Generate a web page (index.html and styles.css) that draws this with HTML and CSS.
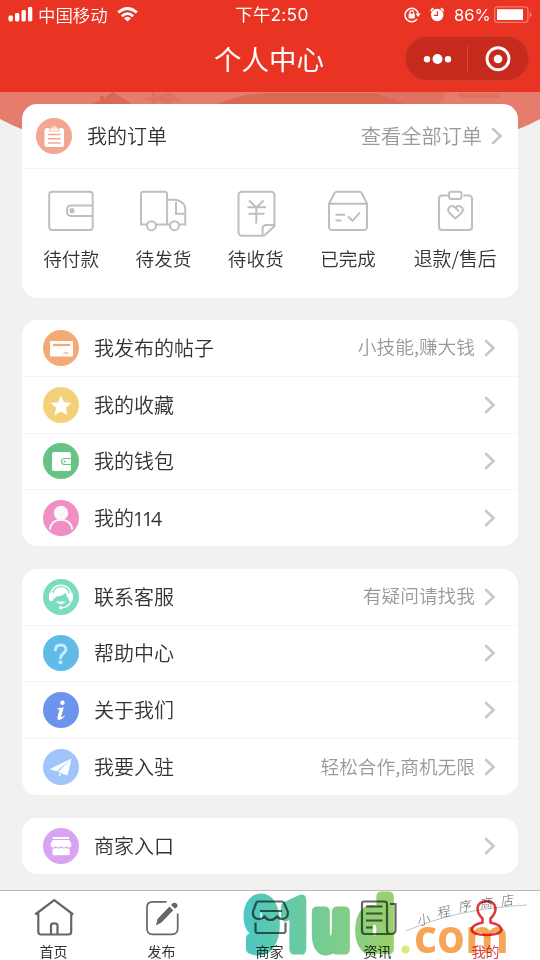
FILE: index.html
```html
<!DOCTYPE html>
<html lang="zh-CN">
<head>
<meta charset="utf-8">
<title>个人中心</title>
<link rel="stylesheet" href="styles.css">
</head>
<body>
<svg width="0" height="0" class="defs"><symbol id="chev" viewBox="0 0 12 20"><path d="M1.300 2.200 9.500 10 1.300 17.800" fill="none" stroke="#c7c7cc" stroke-width="2.600"/></symbol></svg>
<div class="app">
  <header class="header">
    <div class="status">
      <div class="status-left">
        <svg width="25" height="16" viewBox="8 7 25 16" fill="#fff"><rect x="8.500" y="15.500" width="4.300" height="6" rx="1.400"/><rect x="15" y="13" width="4.300" height="8.500" rx="1.400"/><rect x="21.500" y="10" width="4.300" height="11.500" rx="1.400"/><rect x="28" y="7" width="4.300" height="14.500" rx="1.400"/></svg>
        <span class="carrier">中国移动</span>
        <svg class="wifi" width="21" height="15" viewBox="0 0 21 15" fill="none" stroke="#fff" stroke-width="2.700"><path d="M1.200 5.600Q10.500-2.600 19.800 5.600M4.800 9.200Q10.500 4 16.200 9.200"/><path d="M10.500 14.500 7 11.200Q10.500 8.200 14 11.200Z" fill="#fff" stroke="none"/></svg>
      </div>
      <div class="time">下午2:50</div>
      <div class="status-right">
        <svg width="17" height="16" viewBox="405 7 17 16"><path d="M418 19.200A6.700 6.700 0 1 1 419.300 13.500" fill="none" stroke="#fff" stroke-width="1.500"/><path d="M416.500 13.600h5.200l-2.600 3.400z" fill="#fff"/><rect x="409.600" y="13.800" width="6.200" height="4.600" rx=".6" fill="#fff"/><path d="M410.900 14v-1.600a1.800 1.800 0 0 1 3.600 0V14" fill="none" stroke="#fff" stroke-width="1.200"/></svg>
        <svg width="15" height="16" viewBox="431 7 15 16"><circle cx="438.200" cy="15" r="6.200" fill="#fff"/><path d="M431.800 11.200q.6-2.200 2.800-3M444.600 11.200q-.6-2.200-2.800-3" fill="none" stroke="#fff" stroke-width="1.500"/><path d="M438.400 11.200V15.400H434.800" fill="none" stroke="#e93323" stroke-width="1.200"/></svg>
        <span class="pct">86%</span>
        <svg width="38" height="18" viewBox="494 6 38 18"><rect x="494.600" y="6.900" width="33.300" height="15.400" rx="3" fill="none" stroke="#f47b70" stroke-width="1.300"/><rect x="497" y="9.200" width="26" height="10.800" fill="#fff"/><path d="M529.700 12v5.400q2-.8 2-2.700t-2-2.700" fill="#f47b70"/></svg>
      </div>
    </div>
    <div class="titlebar">
      <h1>个人中心</h1>
      <div class="capsule">
        <svg width="124" height="45" viewBox="405 35 124 45"><g fill="#fff"><circle cx="427" cy="58.300" r="3.200"/><circle cx="437.500" cy="58" r="5"/><circle cx="448" cy="58.300" r="3.200"/><circle cx="498" cy="58" r="4.300"/></g><path d="M467.500 44v27" stroke="#d84a3e"/><circle cx="498" cy="57.700" r="11" fill="none" stroke="#fff" stroke-width="2.900"/></svg>
      </div>
    </div>
  </header>
  <div class="hero">
    <svg width="540" height="48" viewBox="0 92 540 48"><defs><clipPath id="arc"><path d="M0 92H540V119Q500 141 430 151H110Q40 141 0 119Z"/></clipPath></defs><g clip-path="url(#arc)"><path d="M0 92H540V140H0Z" fill="#e57c6e"/><g fill="#dc6853"><path d="M91 105 100 100V96H104V98L113 92 132 104V106H91Z"/><path d="M152 92h3v12h-3zM165 92h3v12h-3zM144 99l25-7 12 8-12 4z" opacity=".5"/><path d="M218 104Q240 93 273 93H377L405 104Z"/><path d="M378 92h70l-8 12h-36z" opacity=".5"/><rect x="458" y="93" width="42" height="5" rx="2.500" opacity=".5"/></g></g></svg>
  </div>
  <main class="content">
    <section class="card orders">
      <div class="order-head">
        <svg width="36" height="36" viewBox="36 118 36 36"><circle cx="54" cy="136" r="18" fill="#f2a790"/><rect x="44.500" y="128" width="19.500" height="19" rx="2.500" fill="#fff"/><path d="M49.500 131v-2.500h2a2.800 2.800 0 0 1 5.600 0h2v2.500z" fill="#fff" stroke="#f2a790" stroke-width=".8"/><circle cx="54.300" cy="127.700" r="1" fill="#f2a790"/><path d="M48 134.500h12.500M48 138.700h12.500M48 143h12.500" stroke="#f2a790" stroke-width="1.500"/></svg>
        <span class="label">我的订单</span><span class="hint">查看全部订单</span><svg class="chev"><use href="#chev"/></svg>
      </div>
      <div class="order-grid">
        <div class="order"><svg viewBox="47.500 189 48 48"><rect x="49.700" y="191.700" width="43.500" height="38.300" rx="3"/><path d="M93 205.500H71.500a4 4 0 0 0-4 4v2.500a4 4 0 0 0 4 4H93"/><circle cx="72.500" cy="210.700" r="2.600" class="solid"/></svg><span>待付款</span></div>
        <div class="order"><svg viewBox="139.500 189 48 48"><path d="M147.500 224.500H141.500V194a2.300 2.300 0 0 1 2.300-2.300h21.500a2.300 2.300 0 0 1 2.300 2.300V224.500M156.500 224.500h14M168 199.700h7.500q5.500.7 8.300 4 2 2.300 2 6V224.500h-6M176.500 202v11.700h9"/><circle cx="152" cy="225.700" r="4.500"/><circle cx="175" cy="225.700" r="4.500"/></svg><span>待发货</span></div>
        <div class="order"><svg viewBox="232 189 48 48"><path d="M262.500 235.800H242a3.500 3.500 0 0 1-3.500-3.500V195.200a3.500 3.500 0 0 1 3.500-3.500h29a3.500 3.500 0 0 1 3.500 3.500V226L265 235Q262.500 237 262.500 233.500V229q0-4 4-4h8M249 200.500l7.300 7 7.300-7M247.500 207.200H266M248.500 213.800h16M256.300 207.500V223.500"/></svg><span>待收货</span></div>
        <div class="order"><svg viewBox="324.500 189 48 48"><path d="M329.500 203.800 334.800 193.500Q336 191.700 338 191.700h21.500q2 0 3 1.800l5 10.300V227a3 3 0 0 1-3 3H332.500a3 3 0 0 1-3-3ZM329.500 203.800h38M336 214.700h9.500M336 220.500h6M348.500 216.500l4.500 4.300 7.500-8.500"/></svg><span>已完成</span></div>
        <div class="order wide"><svg viewBox="431 189 48 48"><path d="M448.500 195.500H442a3 3 0 0 0-3 3V227a3 3 0 0 0 3 3h27a3 3 0 0 0 3-3V198.500a3 3 0 0 0-3-3h-5.500M455.500 218.500l-6-5.500q-2.800-3.500.2-6 3.300-2.300 5.800 1 2.500-3.300 5.800-1 3 2.500.2 6Z"/><path d="M455.500 208l3.500 3.500"/><rect x="449" y="191.700" width="12.500" height="7.300" rx="2"/></svg><span>退款/售后</span></div>
      </div>
    </section>

    <section class="card">
      <div class="row"><svg class="ico" viewBox="0 0 36 36"><circle cx="18" cy="18" r="18" fill="#f3aa75"/><rect x="7" y="11" width="23" height="15.500" rx="1" fill="#fff"/><path d="M10 15h17" stroke="#f3aa75" stroke-width="2.200"/><path d="M20.500 23h5" stroke="#f3aa75" stroke-width="1.200"/></svg><span class="label">我发布的帖子</span><span class="hint">小技能,赚大钱</span><svg class="chev"><use href="#chev"/></svg></div>
      <div class="row"><svg class="ico" viewBox="0 0 36 36"><circle cx="18" cy="18" r="18" fill="#f3d178"/><path d="M18 9.500 20.600 15.800 27.500 16.300 22.300 20.800 23.900 27.500 18 23.900 12.100 27.500 13.700 20.800 8.500 16.300 15.400 15.800Z" fill="#fff" stroke="#fff" stroke-linejoin="round"/></svg><span class="label">我的收藏</span><svg class="chev"><use href="#chev"/></svg></div>
      <div class="row"><svg class="ico" viewBox="0 0 36 36"><circle cx="18" cy="18" r="18" fill="#67c286"/><rect x="9" y="9" width="19" height="19" rx="2.500" fill="#fff"/><path d="M28 15.500H21.500a3 3 0 0 0 0 6H28" fill="none" stroke="#67c286" stroke-width="1.100"/><circle cx="21.700" cy="18.500" r="1.100" fill="#67c286"/></svg><span class="label">我的钱包</span><svg class="chev"><use href="#chev"/></svg></div>
      <div class="row"><svg class="ico" viewBox="0 0 36 36"><circle cx="18" cy="18" r="18" fill="#ef8fc2"/><circle cx="18" cy="13" r="7.200" fill="#faf8fa"/><path d="M6.800 29.500C8 22 12 19.800 18 19.800S28.200 22 29.300 29.500" fill="none" stroke="#faf8fa" stroke-width="1.900"/></svg><span class="label">我的<span class="num">114</span></span><svg class="chev"><use href="#chev"/></svg></div>
    </section>

    <section class="card">
      <div class="row"><svg class="ico" viewBox="0 0 36 36"><circle cx="18" cy="18" r="18" fill="#7cdcc0"/><path d="M8 15.500C8.500 3.300 27.500 3.300 28 15.500" fill="none" stroke="#fff" stroke-width="1.500"/><path d="M10 18C9.500 4.800 26.500 4.800 26 18L24.500 19Q23.500 17 23 13.800 19 17.500 13 17.500L11.500 20Z" fill="#fff"/><rect x="6" y="13.500" width="4.500" height="8.500" rx="2" fill="#fff"/><rect x="25.500" y="13.500" width="4.500" height="8.500" rx="2" fill="#fff"/><path d="M28 21.500Q26.500 28 19 28.800M14.500 23Q18 26 21.200 23Z" fill="none" stroke="#fff" stroke-width="1.200"/><circle cx="17.800" cy="28.700" r="1.800" fill="#fff"/></svg><span class="label">联系客服</span><span class="hint">有疑问请找我</span><svg class="chev"><use href="#chev"/></svg></div>
      <div class="row"><svg class="ico" viewBox="0 0 36 36"><circle cx="18" cy="18" r="18" fill="#60bbe9"/><path d="M12.500 15Q12.500 10 17.700 10T22.900 14.800C22.900 18 17.500 18.500 17.500 23" fill="none" stroke="#c5efff" stroke-width="2.900" stroke-linecap="round"/><circle cx="17.500" cy="27.300" r="1.900" fill="#c5efff"/></svg><span class="label">帮助中心</span><svg class="chev"><use href="#chev"/></svg></div>
      <div class="row"><svg class="ico" viewBox="0 0 36 36"><circle cx="18" cy="18" r="18" fill="#6d94ed"/><circle cx="19.500" cy="10.700" r="2.200" fill="#fff"/><path d="M14.300 16.300 20.800 15.300 18.200 24.500Q18.200 26 21.500 23.500L21.800 24.300Q18.500 28 15.500 28 13.800 27.700 14.500 25L16.500 17.500 14.200 17.200Z" fill="#fff"/></svg><span class="label">关于我们</span><svg class="chev"><use href="#chev"/></svg></div>
      <div class="row"><svg class="ico" viewBox="0 0 36 36"><circle cx="18" cy="18" r="18" fill="#a0c5fa"/><path d="M28.500 9.500 7 20 13.500 22.500ZM28.500 9.500 15 23 24.500 26.500ZM16 24.500V27.500L18.500 25.200Z" fill="#fff"/></svg><span class="label">我要入驻</span><span class="hint">轻松合作,商机无限</span><svg class="chev"><use href="#chev"/></svg></div>
    </section>

    <section class="card">
      <div class="row"><svg class="ico" viewBox="0 0 36 36"><circle cx="18" cy="18" r="18" fill="#d7a3f2"/><path d="M10 9H26V11H10ZM9.500 12H26.500L28.300 16V17.500Q28 19.500 26 19.500T23.300 18Q22.500 19.500 20.700 19.500T18 18Q17 19.500 15.300 19.500T12.700 18Q12 19.500 10 19.500T7.700 17.500V16ZM9.500 20.500Q11.500 21 12.700 19.800 15.300 21.200 18 19.800 20.700 21.200 23.300 19.800 25 21 26.700 20.500V26Q26.700 27.300 25.500 27.300H10.700Q9.500 27.300 9.500 26Z" fill="#fff"/></svg><span class="label">商家入口</span><svg class="chev"><use href="#chev"/></svg></div>
    </section>
  </main>

  <nav class="tabbar">
    <div class="tab"><svg viewBox="32 897 42 42"><path d="M34.200 914.500 53.200 900.200 72.200 914.500M37.300 912.500V931.800Q37.300 934.500 40 934.500H67.500Q70.200 934.500 70.200 931.800V912.500M50 934.500V925.500Q50 923.300 53.300 923.300T56.500 925.500V934.500"/></svg><span>首页</span></div>
    <div class="tab"><svg viewBox="140 897 42 42"><path d="M165.500 901.800H151.500Q146 901.800 146 907.300V928.500Q146 934.300 151.500 934.300H171Q176.700 934.300 176.700 928.500V913.500" stroke-width="1.700"/><path d="M155 925.500 156.500 919 168.500 906.500 172.200 910.200 160.500 922.500ZM170 905 172 903Q174 902 175.800 903.700T176 907L174 908.800Z" fill="#666" stroke="none"/></svg><span>发布</span></div>
    <div class="tab"><svg viewBox="248 897 42 42"><path d="M256.500 901.500H281Q282 901.500 283 903L286.800 911.500Q287.500 918.500 281.500 919 278 919 276 916.500 273 920 269.500 920T263.500 916.500Q261 919.500 257 919 251.300 918 252 911.500L255.300 902.700ZM259 911H281M254.500 922.500V931Q254.500 933 256.500 933H282.500Q284.500 933 284.500 931V922.500"/></svg><span>商家</span></div>
    <div class="tab"><svg viewBox="356 897 42 42"><path d="M363 901.500H383.500Q386 901.500 386 904V930Q386 934 390 934 394.500 934 394.500 930V904H389M390 934H364Q361 934 361 931V903.500Q361 901.500 363 901.500M365 906.500H381.500M365 913.500H381.500M365 920.500H381.500M365 927.500H371.500"/></svg><span>资讯</span></div>
    <div class="tab active"><svg viewBox="464 897 42 42"><path d="M481.500 922.500V918.500Q476.500 914 476.500 908.500 477 901.200 485.500 901.200T494.500 908.500Q494.500 914 489.500 918.500V922.500Q500.500 925 500.500 930 499 935 485.500 935T470.500 930Q470.500 925 481.500 922.500Z" stroke-width="2.600"/></svg><span>我的</span></div>
  </nav>

  <div class="watermark">
    <svg width="300" height="72" viewBox="240 888 300 72">
      <defs><linearGradient id="wm" gradientUnits="userSpaceOnUse" x1="243" y1="0" x2="393" y2="0"><stop offset="0" stop-color="#4cc7c2"/><stop offset="1" stop-color="#9bd06b"/></linearGradient></defs>
      <g class="wm-big" fill="url(#wm)" stroke="url(#wm)">
        <text x="245" y="949" textLength="34" lengthAdjust="spacingAndGlyphs">9</text>
        <text class="wm-one" x="281" y="949" textLength="30" lengthAdjust="spacingAndGlyphs">1</text>
        <text x="312" y="949" textLength="38" lengthAdjust="spacingAndGlyphs">u</text>
        <text x="357" y="949" textLength="37" lengthAdjust="spacingAndGlyphs">d</text>
      </g>
      <circle cx="405.500" cy="949.500" r="4" fill="#dfe87a"/>
      <text class="wm-com" x="414" y="953" textLength="95" lengthAdjust="spacingAndGlyphs">com</text>
      <path d="M406 931Q455 909 527 905" fill="none" stroke="#bbb" stroke-width=".9"/>
      <g class="wm-note"><text transform="translate(418 926) rotate(-14) skewX(-10)">小</text><text transform="translate(438 918) rotate(-12) skewX(-10)">程</text><text transform="translate(459 912) rotate(-10) skewX(-10)">序</text><text transform="translate(480 909) rotate(-8) skewX(-10)">商</text><text transform="translate(501 906) rotate(-8) skewX(-10)">店</text></g>
    </svg>
  </div>
</div>
</body>
</html>
```
FILE: styles.css
```css
* { box-sizing: border-box; }
body { margin: 0; background: #f1f1f1; font-family: "Noto Sans CJK SC", sans-serif; font-weight: 350; color: #333; }
svg { display: block; flex: none; }
.defs { position: absolute; }
.app { position: relative; width: 540px; height: 960px; overflow: hidden; display: flex; flex-direction: column; }

.header { height: 92px; flex: none; background: #e93323; color: #fff; }
.status { height: 30px; padding: 0 8px; display: grid; grid-template-columns: 1fr auto 1fr; align-items: center; line-height: 30px; }
.status-left, .status-right { display: flex; align-items: center; }
.carrier { font-size: 17.400px; margin: 0 9px 0 5px; }
.wifi { margin-bottom: 2px; }
.time { font-family: Inter, "Noto Sans CJK SC", sans-serif; font-size: 17.300px; font-weight: 400; letter-spacing: .3px; padding-left: 4px; }
.status-right { justify-content: flex-end; }
.status-right svg + svg { margin-left: 9px; }
.pct { font-family: Inter, sans-serif; font-size: 16.500px; font-weight: 400; margin: 0 4px 0 9px; width: 36px; white-space: nowrap; }
.titlebar { height: 56px; display: grid; grid-template-columns: 1fr auto 1fr; align-items: center; padding: 0 11px 0 9px; }
.titlebar h1 { grid-column: 2; margin: 0; font-size: 27.500px; line-height: 56px; font-weight: 400; }
.capsule { justify-self: end; width: 124px; height: 45px; border-radius: 23px; background: #c62a1d; box-shadow: inset 0 0 0 1px #d23b2f; }

.hero { height: 48px; margin-bottom: -36px; flex: none; }
.content { position: relative; flex: none; height: 786px; padding: 0 22px; display: flex; flex-direction: column; gap: 22.500px; }
.card { background: #fff; border-radius: 15px; flex: none; }
.orders { height: 193.500px; }
.order-head { height: 65px; display: flex; align-items: center; padding: 0 15px 0 14px; border-bottom: 1.500px solid #f1f1f1; }
.order-head .label { margin-left: 15px; }
.order-head .hint { font-size: 20.200px; padding-bottom: 0; }
.label { font-size: 20px; margin-left: 15px; line-height: 30px; }
.num { font-family: "Open Sans", sans-serif; font-weight: 400; font-size: 19.500px; letter-spacing: -2.200px; margin-left: -1px; }
.hint { margin-left: auto; color: #999; font-size: 18.700px; line-height: 30px; padding-bottom: 3px; }
.chev { width: 12px; height: 20px; margin-left: auto; }
.hint + .chev { margin-left: 9px; }
.order-grid { display: flex; padding: 20px 0 0 3px; }
.order { width: 92.300px; display: flex; flex-direction: column; align-items: center; font-size: 18.600px; line-height: 28px; }
.order.wide { width: 122px; font-size: 18.900px; }
.order svg { width: 48px; height: 48px; margin-bottom: 7px; fill: none; stroke: #bfbfbf; stroke-width: 2; }
.order .solid { fill: #bfbfbf; stroke: none; }
.row { height: 56.750px; padding: 0 22px 0 21px; display: flex; align-items: center; border-bottom: 1.500px solid #f4f4f4; }
.row:last-child { height: 56px; border-bottom: 0; }
.ico { width: 36px; height: 36px; }

.tabbar { position: relative; flex: none; height: 70px; display: flex; background: #fff; border-top: 1px solid #b9b9b9; }
.tab { width: 108px; padding-right: 1px; display: flex; flex-direction: column; align-items: center; font-size: 14px; font-weight: 400; line-height: 20px; }
.tab svg { width: 42px; height: 42px; margin-top: 6px; margin-bottom: 1.500px; fill: none; stroke: #666; stroke-width: 2.200; }
.tab.active { color: #d83e42; }
.tab.active svg { stroke: #df3a3f; }

.watermark { position: absolute; left: 240px; top: 888px; mix-blend-mode: multiply; }
.watermark svg { overflow: visible; }
.wm-big { font-family: "DejaVu Sans", sans-serif; font-weight: 700; font-size: 68px; stroke-width: 11px; stroke-linejoin: round; }
.wm-one { font-family: Roboto, sans-serif; font-weight: 900; }
.wm-com { font-family: "Open Sans", sans-serif; font-weight: 700; font-size: 46px; fill: #f6a556; }
.wm-note { font-family: "Noto Sans CJK SC", sans-serif; font-weight: 300; font-size: 13px; fill: #666; }
```
